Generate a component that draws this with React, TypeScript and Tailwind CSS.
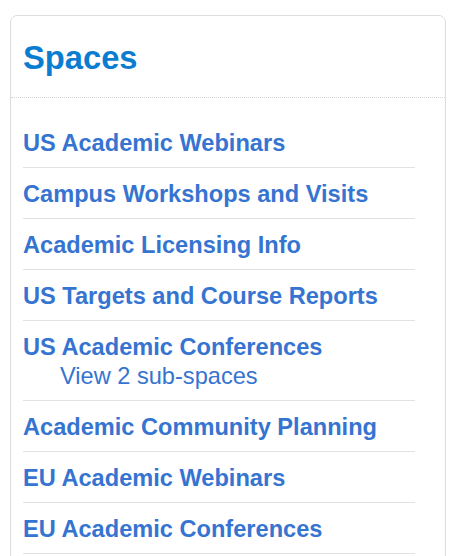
import React from 'react';

type Space = { name: string; sub?: string };

const SPACES: Space[] = [
  { name: 'US Academic Webinars' },
  { name: 'Campus Workshops and Visits' },
  { name: 'Academic Licensing Info' },
  { name: 'US Targets and Course Reports' },
  { name: 'US Academic Conferences', sub: 'View 2 sub-spaces' },
  { name: 'Academic Community Planning' },
  { name: 'EU Academic Webinars' },
  { name: 'EU Academic Conferences' },
];

export default function App() {
  return (
    <div
      className="h-[556px] overflow-hidden bg-white pl-[10px] pt-[15px] pr-[22px]"
      style={{ fontFamily: '"Liberation Sans", Arial, sans-serif' }}>
      <section className="h-[600px] rounded-[7px] border border-[#dddddd]">
        <header className="border-b border-dotted border-[#d6d6d6] pl-3 pt-[22px] pb-[19px]">
          <h2 className="text-[32.7px] font-bold leading-[40px] text-[#0b7dd0]">Spaces</h2>
        </header>
        <ul className="pl-3 pr-[30px] pt-[19px]">
          {SPACES.map((space) => (
            <li key={space.name} className="border-b border-[#e2e2e2] pt-3 pb-[9px]">
              <a href="#" className="block text-[23.6px] font-bold leading-[29px] text-[#3674d1]">
                {space.name}
              </a>
              {space.sub && (
                <a href="#" className="block pl-[37px] text-[23.6px] leading-[29px] text-[#3674d1]">
                  {space.sub}
                </a>
              )}
            </li>
          ))}
        </ul>
      </section>
    </div>
  );
}
